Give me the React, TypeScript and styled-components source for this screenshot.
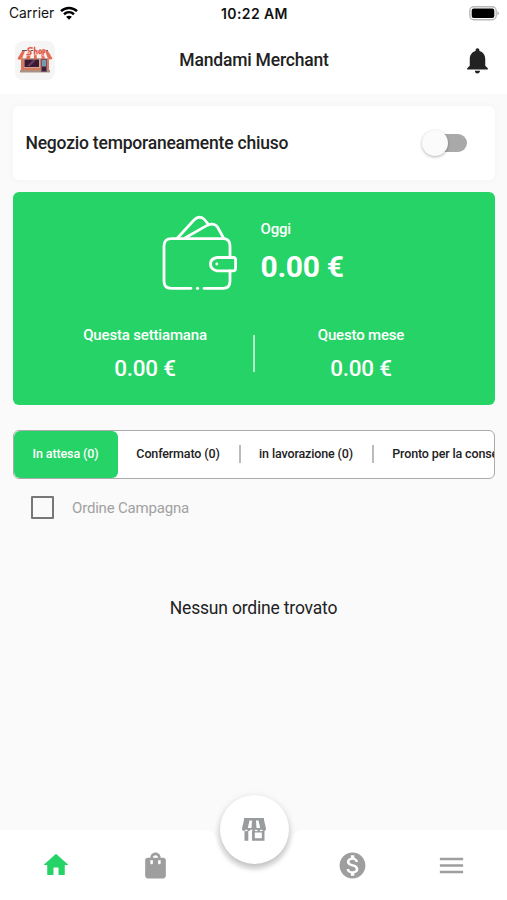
import React from "react";
import styled, { createGlobalStyle } from "styled-components";
import { MdHome, MdMenu, MdMonetizationOn, MdNotifications, MdShoppingBag } from "react-icons/md";

const GREEN = "#26d366";

const GlobalStyle = createGlobalStyle`
  * { box-sizing: border-box; }
  body { margin: 0; background: #fafafa; }
  svg { display: block; }
`;

const Screen = styled.div`
  width: 507px;
  height: 900px;
  display: flex;
  flex-direction: column;
  overflow: hidden;
  background: #fafafa;
  color: #222;
  font-family: Roboto, sans-serif;
`;

const Label = styled.span<{ $size: number; $weight?: number; $spacing?: number }>`
  font-size: ${(p) => p.$size}px;
  font-weight: ${(p) => p.$weight ?? 500};
  letter-spacing: ${(p) => p.$spacing ?? 0}px;
  line-height: 1.2;
  white-space: nowrap;
`;

const Header = styled.header`
  height: 94px;
  flex: none;
  background: #fff;
`;

const StatusBar = styled.div`
  height: 27px;
  padding: 0 7px 0 9px;
  display: grid;
  grid-template-columns: 1fr auto 1fr;
  align-items: center;
  color: #111;
  font-family: Inter, sans-serif;

  > span {
    padding-top: 1px;
  }
`;

const Carrier = styled.div`
  display: flex;
  align-items: center;
  gap: 6px;
`;

const BatterySlot = styled.div`
  justify-self: end;
`;

const TitleBar = styled.div`
  height: 66px;
  padding: 0 14px 0 15px;
  display: grid;
  grid-template-columns: 1fr auto 1fr;
  align-items: center;
`;

const Avatar = styled.div`
  width: 40px;
  height: 39px;
  border-radius: 8px;
  background: #f5f5f5;
  overflow: hidden;
`;

const BellSlot = styled.div`
  justify-self: end;
`;

const Content = styled.main`
  flex: 1;
  padding: 12px 12px 0 13px;
  display: flex;
  flex-direction: column;
`;

const StatusCard = styled.section`
  height: 74px;
  padding: 0 28px 0 12.5px;
  display: flex;
  align-items: center;
  justify-content: space-between;
  border-radius: 6px;
  background: #fff;
  box-shadow: 0 0 5px 2px rgba(0, 0, 0, 0.02);
`;

const Track = styled.div`
  width: 42px;
  height: 18px;
  border-radius: 9px;
  display: flex;
  align-items: center;
  background: #a9a9a9;
`;

const Thumb = styled.div`
  width: 26px;
  height: 26px;
  margin-left: -3px;
  flex: none;
  border-radius: 50%;
  background: #fbfbfb;
  box-shadow: 0 1px 3px rgba(0, 0, 0, 0.3);
`;

const Earnings = styled.section`
  height: 213px;
  margin-top: 12px;
  padding-top: 22px;
  border-radius: 6px;
  background: ${GREEN};
  color: #fff;
`;

const Today = styled.div`
  display: flex;
  gap: 20.5px;
  height: 80px;
  padding-left: 147px;
`;

const TodayAmount = styled.div`
  display: flex;
  flex-direction: column;
  gap: 11px;
  padding-top: 6px;
`;

const Periods = styled.div`
  display: grid;
  grid-template-columns: 214px 1px 216px;
  justify-content: center;
  margin-top: 32px;
  height: 58px;
`;

const Period = styled.div`
  display: flex;
  flex-direction: column;
  align-items: center;
  gap: 11px;
  padding-right: 1px;
`;

const PeriodLine = styled.div`
  width: 2px;
  height: 37px;
  margin-top: 9px;
  background: #b5edca;
`;

const Tabs = styled.nav`
  height: 49px;
  margin-top: 25px;
  display: flex;
  overflow: hidden;
  border: 1px solid #aaa;
  border-radius: 6px;
  background: #fff;
`;

const Tab = styled.div<{ $width: number; $active?: boolean }>`
  flex: none;
  width: ${(p) => p.$width}px;
  padding: 0 1px 2px 0;
  display: flex;
  align-items: center;
  justify-content: center;
  border-radius: 6px;
  color: ${(p) => (p.$active ? "#fff" : "#222")};
  background: ${(p) => (p.$active ? GREEN : "none")};
`;

const TabLine = styled.div`
  flex: none;
  align-self: center;
  width: 2px;
  height: 18px;
  margin-bottom: 1px;
  background: #bbb;
`;

const CampaignRow = styled.label`
  display: flex;
  align-items: center;
  gap: 18px;
  margin-top: 17px;
  padding-left: 18px;
  color: #a1a1a1;
`;

const Checkbox = styled.div`
  width: 23px;
  height: 23px;
  border: 2px solid #777;
  border-radius: 1px;
`;

const Empty = styled.div`
  margin-top: 79px;
  padding-right: 1px;
  text-align: center;
`;

const BottomNav = styled.nav`
  position: relative;
  flex: none;
  height: 70px;
  padding: 0 6.5px 0 7px;
  display: grid;
  grid-template-columns: repeat(5, 1fr);
  align-items: center;
  justify-items: center;
  background: #fff;
`;

const NavItem = styled.div<{ $active?: boolean }>`
  color: ${(p) => (p.$active ? GREEN : "#9e9e9e")};
`;

const Notch = styled.svg`
  position: absolute;
  top: 0;
  left: 204px;
`;

const StoreButton = styled.div`
  position: absolute;
  top: -35px;
  left: 219.5px;
  width: 69px;
  height: 69px;
  border-radius: 50%;
  display: flex;
  align-items: center;
  justify-content: center;
  background: #fff;
  box-shadow: 0 4px 6px rgba(0, 0, 0, 0.2), 0 1px 8px rgba(0, 0, 0, 0.08);
`;

const WifiIcon = () => (
  <svg width="18" height="14" viewBox="0 0 18 14" fill="none" stroke="#000" strokeWidth="2.5">
    <path d="M1 5.1C5.5.8 12.5.8 17 5.1" />
    <path d="M4 8.2C6.9 5.6 11.1 5.6 14 8.2" />
    <path d="M9 13.7 6.1 10.8C7.8 9.3 10.2 9.3 11.9 10.8Z" fill="#000" stroke="none" />
  </svg>
);

const BatteryIcon = () => (
  <svg width="31" height="15" viewBox="0 0 31 15">
    <rect x=".8" y=".8" width="26.4" height="13" rx="4" fill="#fff" stroke="#b8b8b8" strokeWidth="1.4" />
    <rect x="2.7" y="2.6" width="22.6" height="9.4" rx="2" fill="#000" />
    <path d="M28.5 5.2q2.8 2.1 0 4.2z" fill="#aaa" />
  </svg>
);

const ShopPicture = () => (
  <svg width="40" height="39" viewBox="0 0 40 39">
    <path d="M7 9h26v9H7z" fill="#685b60" />
    <path d="M6 18h28v13H6z" fill="#d8785d" />
    <path d="M5 29h30v2.5H5z" fill="#a99183" />
    <path d="M9 18h16v9H9z" fill="#d3a695" />
    <path d="M9.5 18.5h14.5v7.5H9.5z" fill="#3b1833" />
    <path d="m12 25 6-6h3l-6 6z" fill="#68405c" />
    <path d="M26 18h6v13h-6z" fill="#735467" />
    <path d="M27 19h4v6h-4z" fill="#709db4" />
    <path d="M27 26h4v4h-4z" fill="#36223f" />
    <path d="M7 10h26l4.5 7.5q-2 3-4.5 0H7q-2.5 3-4.5 0z" fill="#fff1ec" />
    <path d="m7 10-4.5 7.5q2 2.5 4.5 0l3-7.5zm6 0-2 8h4l1-8zm6 0v8h3l-1-8zm6 0 2 8h3l-2-8zm5 0 3 7.5q2 2 4.5 0L33 10z" fill="#e46c55" />
    <g fill="none" strokeLinecap="round">
      <path d="M17 7q-3-1-4 1 0 2 2 2.5 2 1 0 3l-3 .2M19.5 6.5v6.5M20 10q2-1.5 2 2.5M24.5 9.5q-1.5 2 0 3 2 0 2-2-1-2-2-1M28 14V9q2.5-.5 2 1.5 0 1-2 1.5" stroke="#f7dcd5" strokeWidth="2.5" />
      <path d="M17 7q-3-1-4 1 0 2 2 2.5 2 1 0 3l-3 .2M19.5 6.5v6.5M20 10q2-1.5 2 2.5M24.5 9.5q-1.5 2 0 3 2 0 2-2-1-2-2-1M28 14V9q2.5-.5 2 1.5 0 1-2 1.5" stroke="#dc5c50" strokeWidth="1.4" />
    </g>
  </svg>
);

const WalletIcon = () => (
  <svg width="80" height="80" viewBox="0 0 80 80" fill="none" stroke="#fff" strokeWidth="2.8" strokeLinecap="round" strokeLinejoin="round">
    <path d="M31 74.3H11.5Q4 74.3 4 67V32Q4 24.7 11.5 24.7H63Q70 24.7 70 32V43.5M44 74.3H63Q70 74.3 70 67V57" />
    <path d="M17.5 24 34 6Q39 1 44 5L48 9.8M25 24 47.5 11.2Q54 8.2 57.5 13L63.5 24" strokeWidth="2.7" />
    <path d="M57 43.5H73.2Q75.6 43.5 75.6 46V54Q75.6 56.8 73.2 56.8H57Q50.5 55.7 50.5 50.1 50.5 44.5 57 43.5Z" />
    <circle cx="56.8" cy="50" r="1.4" fill="#fff" stroke="none" />
    <circle cx="37.5" cy="74.3" r="1.6" fill="#fff" stroke="none" />
  </svg>
);

const StoreIcon = () => (
  <svg width="26" height="25" viewBox="0 0 26 25">
    <path d="M3 1h20v2.5H3z" fill="#989c9e" />
    <path d="M3 3 1 11.5Q1 14 3.5 14H22.5Q25 14 25 11.5L23 3z" fill="#989c9e" />
    <path d="M8.5 3.5H11L10.5 11H6.8zM15 3.5h2.5L19.2 11h-3.7z" fill="#fff" />
    <path d="M3.5 13h3.8v10.7H3.5zM11 13h12.5v10.7H11zM13.8 15.5v5.7h7v-5.7z" fill="#989c9e" fillRule="evenodd" />
    <path d="M4 12.8q1.2 1.8 2.4 0M9 12.8q1.2 1.8 2.4 0M14 12.8q1.2 1.8 2.4 0M19 12.8q1.2 1.8 2.4 0" stroke="#fff" strokeWidth="1.2" fill="none" />
  </svg>
);

export default function App() {
  return (
    <Screen>
      <GlobalStyle />
      <Header>
        <StatusBar>
          <Carrier>
            <Label $size={13.8} $weight={400}>Carrier</Label>
            <WifiIcon />
          </Carrier>
          <Label $size={14} $weight={600} $spacing={0.4}>10:22 AM</Label>
          <BatterySlot><BatteryIcon /></BatterySlot>
        </StatusBar>
        <TitleBar>
          <Avatar><ShopPicture /></Avatar>
          <Label $size={17.5} $spacing={-0.19}>Mandami Merchant</Label>
          <BellSlot><MdNotifications size={31} /></BellSlot>
        </TitleBar>
      </Header>
      <Content>
        <StatusCard>
          <Label $size={17.5} $spacing={-0.21}>Negozio temporaneamente chiuso</Label>
          <Track><Thumb /></Track>
        </StatusCard>
        <Earnings>
          <Today>
            <WalletIcon />
            <TodayAmount>
              <Label $size={15} $spacing={-0.2}>Oggi</Label>
              <Label $size={30} $weight={700} $spacing={-0.3}>0.00 €</Label>
            </TodayAmount>
          </Today>
          <Periods>
            <Period>
              <Label $size={15} $spacing={-0.17}>Questa settiamana</Label>
              <Label $size={22.5} $spacing={-0.25}>0.00 €</Label>
            </Period>
            <PeriodLine />
            <Period>
              <Label $size={15} $spacing={-0.17}>Questo mese</Label>
              <Label $size={22.5} $spacing={-0.25}>0.00 €</Label>
            </Period>
          </Periods>
        </Earnings>
        <Tabs>
          <Tab $width={104} $active><Label $size={12.5} $spacing={-0.12}>In attesa (0)</Label></Tab>
          <Tab $width={121}><Label $size={12.5} $spacing={-0.14}>Confermato (0)</Label></Tab>
          <TabLine />
          <Tab $width={131}><Label $size={12.5} $spacing={-0.14}>in lavorazione (0)</Label></Tab>
          <TabLine />
          <Tab $width={182}><Label $size={12.5} $spacing={-0.14}>Pronto per la consegna (0)</Label></Tab>
        </Tabs>
        <CampaignRow>
          <Checkbox />
          <Label $size={15} $weight={400} $spacing={-0.19}>Ordine Campagna</Label>
        </CampaignRow>
        <Empty><Label $size={17.5} $weight={400} $spacing={-0.19}>Nessun ordine trovato</Label></Empty>
      </Content>
      <BottomNav>
        <NavItem $active><MdHome size={30} /></NavItem>
        <NavItem><MdShoppingBag size={31} /></NavItem>
        <Notch width="100" height="42" viewBox="0 0 100 42">
          <path d="M0 0Q10 0 12 8A38.5 38.5 0 0 0 88 8Q90 0 100 0Z" fill="#fafafa" />
        </Notch>
        <StoreButton><StoreIcon /></StoreButton>
        <span />
        <NavItem><MdMonetizationOn size={31} /></NavItem>
        <NavItem><MdMenu size={31} /></NavItem>
      </BottomNav>
    </Screen>
  );
}
